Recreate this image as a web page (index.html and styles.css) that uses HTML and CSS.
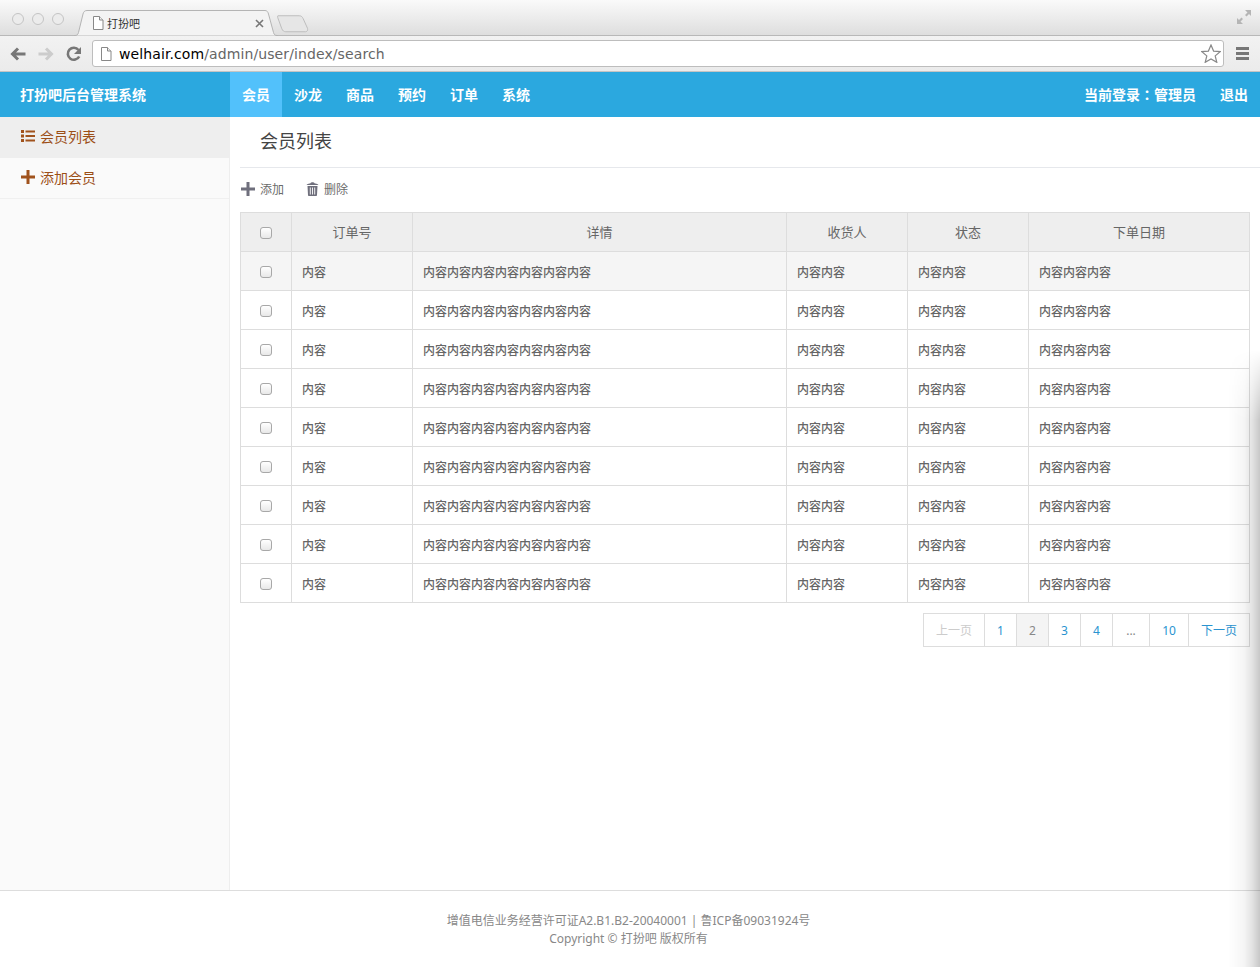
FILE: index.html
```html
<!DOCTYPE html>
<html lang="zh-CN">
<head>
    <meta charset="UTF-8">
    <title>打扮吧后台管理系统</title>
    <link rel="stylesheet" href="styles.css">
</head>
<body>
    <!-- browser window top -->
    <div class="tabbar">
        <div class="lights"><i></i><i></i><i></i></div>
        <div class="tab">
            <svg class="tab-bg" width="204" height="26" viewBox="0 0 204 26"><path d="M0 25.500h1c2 0 3-1 3.500-3L9 4c.5-2 1.500-3.500 4-3.500h178c2 0 3 1.500 3.500 3.500l5 18.500c.5 2 1.500 3 3.500 3h1" fill="#f3f3f3" stroke="#b4b4b4"/></svg>
            <svg class="page-icon" width="12" height="14" viewBox="0 0 12 14"><path d="M1.500.5h6l3.500 3.500v9.500h-9.500z" fill="#fff" stroke="#888"/><path d="M7.500.5v3.500h3.500" fill="#eee" stroke="#888"/></svg>
            <span class="tab-title">打扮吧</span>
            <svg class="tab-close" width="9" height="9" viewBox="0 0 9 9"><path d="M1 1l7 7M8 1l-7 7" stroke="#777" stroke-width="1.600"/></svg>
        </div>
        <svg class="new-tab" width="32" height="18" viewBox="0 0 33 18"><path d="M1 .5h22c2 0 3 1 4 3l4.500 10c.5 2-.5 3.500-2 3.500H9c-2 0-3-1-4-3L.8 2.500C.5 1.500.5.500 1 .5z" fill="#e6e6e6" stroke="#bcbcbc"/></svg>
        <svg class="fullscreen" width="16" height="16" viewBox="0 0 16 16"><path d="M9 1h6v6l-2-2-2.500 2.500-1.500-1.500 2.500-2.500zM7 15H1V9l2 2 2.500-2.500 1.500 1.500-2.500 2.500z" fill="#b5b5b5"/></svg>
    </div>
    <div class="toolbar">
        <svg width="16" height="14" viewBox="0 0 16 14"><path d="M15.500 7H3M8 1.500L2.500 7 8 12.500" fill="none" stroke="#777" stroke-width="3"/></svg>
        <svg width="16" height="14" viewBox="0 0 16 14"><path d="M.5 7H13M8 1.500L13.500 7 8 12.500" fill="none" stroke="#ccc" stroke-width="3"/></svg>
        <svg width="16" height="16" viewBox="0 0 16 16"><path d="M13.200 10.500A6 6 0 1 1 12.500 4" fill="none" stroke="#777" stroke-width="2.600"/><path d="M15 1v7H8z" fill="#777"/></svg>
        <div class="omnibox">
            <svg width="12" height="14" viewBox="0 0 12 14"><path d="M1.500.5h6l3.500 3.500v9.500h-9.500z" fill="#fff" stroke="#888"/><path d="M7.500.5v3.500h3.500" fill="#eee" stroke="#888"/></svg>
            <span class="url"><b>welhair.com</b>/admin/user/index/search</span>
            <svg class="star" width="20" height="19" viewBox="0 0 20 19"><path d="M10 1l2.600 6.100 6.600.5-5 4.300 1.600 6.400L10 14.900l-5.800 3.400 1.600-6.400-5-4.300 6.600-.5z" fill="#fff" stroke="#888" stroke-width="1.200"/></svg>
        </div>
        <div class="menu-btn"><i></i><i></i><i></i></div>
    </div>

    <div class="navbar">
        <div class="brand">打扮吧后台管理系统</div>
        <ul class="nav">
            <li class="active">会员</li>
            <li>沙龙</li>
            <li>商品</li>
            <li>预约</li>
            <li>订单</li>
            <li>系统</li>
        </ul>
        <div class="user">
            <span class="user-name" lang="zh-TW">当前登录：管理员</span>
            <span>退出</span>
        </div>
    </div>

    <div class="main">
        <div class="sidebar">
            <div class="side-item current">
                <svg width="14" height="12" viewBox="0 0 14 12"><path d="M0 0h3v3H0zM0 4.500h3v3H0zM0 9h3v3H0zM4.500.5H14v2H4.500zM4.500 5H14v2H4.500zM4.500 9.500H14v2H4.500z" fill="#a0521c"/></svg>
                会员列表
            </div>
            <div class="side-item">
                <svg width="14" height="14" viewBox="0 0 14 14"><path d="M5.500 0h3v5.500H14v3H8.500V14h-3V8.500H0v-3h5.500z" fill="#a0521c"/></svg>
                添加会员
            </div>
        </div>
        <div class="content">
            <h2 class="page-title">会员列表</h2>
            <div class="actions">
                <span class="action">
                    <svg width="14" height="14" viewBox="0 0 14 14"><path d="M5.500 0h3v5.500H14v3H8.500V14h-3V8.500H0v-3h5.500z" fill="#6f6f7c"/></svg>
                    添加
                </span>
                <span class="action">
                    <svg width="13" height="14" viewBox="0 0 13 14"><path d="M.5 3C1 1.500 4 1.500 4.500 1.200 5 0 8 0 8.500 1.200 9 1.500 12 1.500 12.500 3zM1.500 4h10l-.5 9c0 .6-.5 1-1 1H3c-.5 0-1-.4-1-1z" fill="#6f6f7c"/><path d="M4.300 5.500v7M6.500 5.500v7M8.700 5.500v7" stroke="#fff" stroke-width=".9"/></svg>
                    删除
                </span>
            </div>
            <table class="grid">
                <colgroup>
                    <col class="c-check"><col class="c-no"><col class="c-detail"><col class="c-man"><col class="c-state"><col class="c-date">
                </colgroup>
                <thead>
                    <tr><th><input type="checkbox"></th><th>订单号</th><th>详情</th><th>收货人</th><th>状态</th><th>下单日期</th></tr>
                </thead>
                <tbody>
                    <tr class="hover"><td><input type="checkbox"></td><td>内容</td><td>内容内容内容内容内容内容内容</td><td>内容内容</td><td>内容内容</td><td>内容内容内容</td></tr>
                    <tr><td><input type="checkbox"></td><td>内容</td><td>内容内容内容内容内容内容内容</td><td>内容内容</td><td>内容内容</td><td>内容内容内容</td></tr>
                    <tr><td><input type="checkbox"></td><td>内容</td><td>内容内容内容内容内容内容内容</td><td>内容内容</td><td>内容内容</td><td>内容内容内容</td></tr>
                    <tr><td><input type="checkbox"></td><td>内容</td><td>内容内容内容内容内容内容内容</td><td>内容内容</td><td>内容内容</td><td>内容内容内容</td></tr>
                    <tr><td><input type="checkbox"></td><td>内容</td><td>内容内容内容内容内容内容内容</td><td>内容内容</td><td>内容内容</td><td>内容内容内容</td></tr>
                    <tr><td><input type="checkbox"></td><td>内容</td><td>内容内容内容内容内容内容内容</td><td>内容内容</td><td>内容内容</td><td>内容内容内容</td></tr>
                    <tr><td><input type="checkbox"></td><td>内容</td><td>内容内容内容内容内容内容内容</td><td>内容内容</td><td>内容内容</td><td>内容内容内容</td></tr>
                    <tr><td><input type="checkbox"></td><td>内容</td><td>内容内容内容内容内容内容内容</td><td>内容内容</td><td>内容内容</td><td>内容内容内容</td></tr>
                    <tr><td><input type="checkbox"></td><td>内容</td><td>内容内容内容内容内容内容内容</td><td>内容内容</td><td>内容内容</td><td>内容内容内容</td></tr>
                </tbody>
            </table>
            <div class="pager">
                <a class="disabled prev">上一页</a><a class="num">1</a><a class="num on">2</a><a class="num">3</a><a class="num">4</a><a class="dots">...</a><a class="ten">10</a><a class="next">下一页</a>
            </div>
        </div>
    </div>

    <div class="footer">
        <p>增值电信业务经营许可证A2.B1.B2-20040001 | 鲁ICP备09031924号</p>
        <p>Copyright © 打扮吧 版权所有</p>
    </div>

    <div class="edge-shadow"></div>
</body>
</html>
```

FILE: styles.css
```css
* {
    box-sizing: border-box;
}
html, body {
    margin: 0;
    padding: 0;
}
body {
    position: relative;
    width: 1260px;
    height: 967px;
    overflow: hidden;
    display: flex;
    flex-direction: column;
    background: #fff;
    font-family: "Noto Sans", "Noto Sans CJK SC", sans-serif;
    font-size: 12px;
    color: #555;
}

/* browser top */
.tabbar {
    position: relative;
    height: 36px;
    flex: none;
    display: flex;
    align-items: flex-end;
    padding-left: 12px;
    background: linear-gradient(to bottom, #fafafa, #dedede);
    border-bottom: 1px solid #b8b8b8;
}
.lights {
    display: flex;
    gap: 8px;
    align-self: flex-start;
    margin-top: 13px;
}
.lights i {
    width: 12px;
    height: 12px;
    border-radius: 50%;
    border: 1px solid #c4c4c4;
    background: #ececec;
}
.tab {
    position: relative;
    width: 204px;
    height: 26px;
    margin-left: 10px;
    margin-bottom: -1px;
    display: flex;
    align-items: center;
    padding-left: 18px;
}
.tab-bg {
    position: absolute;
    top: 0;
    left: 0;
}
.page-icon, .tab-title, .tab-close {
    position: relative;
}
.tab-title {
    margin-left: 3px;
    font-size: 11px;
    color: #333;
}
.tab-close {
    margin-left: auto;
    margin-right: 14px;
}
.new-tab {
    margin-left: -1px;
    margin-bottom: 2px;
}
.fullscreen {
    position: absolute;
    top: 9px;
    right: 8px;
}
.toolbar {
    height: 36px;
    flex: none;
    display: flex;
    align-items: center;
    gap: 12px;
    padding-left: 10px;
    background: linear-gradient(to bottom, #f2f2f2, #ebebeb);
    border-bottom: 1px solid #c4c4c4;
}
.omnibox {
    width: 1132px;
    height: 27px;
    margin-left: -2px;
    display: flex;
    align-items: center;
    padding: 0 2px 0 7px;
    background: #fff;
    border: 1px solid #bdbdbd;
    border-radius: 3px;
}
.url {
    margin-left: 7px;
    font-family: "DejaVu Sans", sans-serif;
    font-size: 14px;
    letter-spacing: .1px;
    color: #666;
}
.url b {
    font-weight: 400;
    color: #000;
}
.star {
    margin-left: auto;
}
.menu-btn {
    display: flex;
    flex-direction: column;
    gap: 2px;
}
.menu-btn i {
    width: 13px;
    height: 3px;
    background: #777;
}

/* navbar */
.navbar {
    height: 45px;
    flex: none;
    display: flex;
    align-items: stretch;
    background: #2ba8df;
    color: #fff;
    font-size: 14px;
    font-weight: 700;
    line-height: 45px;
}
.brand {
    width: 230px;
    padding-left: 20px;
}
.nav {
    display: flex;
    margin: 0;
    padding: 0;
    list-style: none;
}
.nav li {
    width: 52px;
    text-align: center;
}
.nav li.active {
    background: #52c1fb;
}
.user {
    margin-left: auto;
    display: flex;
    gap: 24px;
    padding-right: 12px;
}
/* TC font has the centred colon */
.user-name {
    font-family: "Noto Sans CJK TC", sans-serif;
}

/* body area */
.main {
    flex: 1;
    display: flex;
    min-height: 0;
}
.sidebar {
    width: 230px;
    flex: none;
    background: #fafafa;
    border-right: 1px solid #eee;
}
.side-item {
    height: 41px;
    display: flex;
    align-items: center;
    gap: 5px;
    padding-left: 21px;
    padding-bottom: 2px;
    font-size: 14px;
    color: #9c4f17;
    border-bottom: 1px solid #f0f0f0;
}
.side-item.current {
    background: #eee;
    border-bottom: none;
    padding-bottom: 4px;
}
.content {
    flex: 1;
    padding-left: 10px;
    padding-right: 10px;
}
.page-title {
    margin: 0 -10px 0 0;
    height: 51px;
    padding-left: 20px;
    line-height: 49px;
    font-size: 18px;
    font-weight: 400;
    color: #444;
    border-bottom: 1px solid #e6e8ec;
}
.actions {
    height: 44px;
    display: flex;
    align-items: center;
    gap: 22px;
    padding-left: 1px;
    padding-bottom: 2px;
    color: #6b6b6b;
}
.action {
    display: flex;
    align-items: center;
    gap: 5px;
}
.grid {
    width: 1010px;
    table-layout: fixed;
    border-collapse: collapse;
}
.c-check { width: 51px; }
.c-no { width: 121px; }
.c-detail { width: 374px; }
.c-man { width: 121px; }
.c-state { width: 121px; }
.grid th, .grid td {
    height: 39px;
    border: 1px solid #ddd;
    font-size: 12px;
}
.grid th {
    padding: 0 10px 1px;
    text-align: center;
    font-size: 13px;
    font-weight: 400;
    background: #eee;
    color: #666;
}
.grid td {
    padding: 2px 10px 0;
    font-weight: 500;
    color: #666;
}
.grid tr > :first-child {
    padding: 0;
    text-align: center;
}
.grid tr > th:first-child {
    padding-bottom: 2px;
}
.grid tr.hover td {
    background: #f5f5f5;
}
.grid input {
    appearance: none;
    -webkit-appearance: none;
    width: 12px;
    height: 12px;
    margin: 0;
    vertical-align: middle;
    background: linear-gradient(to bottom, #fff, #e8e8e8);
    border: 1px solid #a8a8a8;
    border-radius: 3px;
}
.pager {
    display: flex;
    justify-content: flex-end;
    margin-top: 10px;
}
.pager a {
    height: 34px;
    line-height: 33px;
    text-align: center;
    border: 1px solid #ddd;
    margin-left: -1px;
    color: #2a93d0;
}
.pager .num { width: 33px; }
.pager .prev { width: 62px; }
.pager .dots { width: 38px; color: #888; }
.pager .ten { width: 40px; }
.pager .next { width: 62px; }
.pager .disabled { color: #ccc; }
.pager .on {
    background: #f4f4f4;
    color: #888;
}

.footer {
    height: 77px;
    flex: none;
    padding: 21px 3px 0 0;
    border-top: 1px solid #ddd;
    text-align: center;
    color: #888;
}
.footer p {
    margin: 0;
    line-height: 18px;
}

/* soft dark edge lying over the right side of the page */
.edge-shadow {
    position: absolute;
    top: 350px;
    right: 0;
    width: 32px;
    height: 617px;
    background: linear-gradient(to right, rgba(0,0,0,0), rgba(0,0,0,.04) 50%, rgba(0,0,0,.11) 75%, rgba(0,0,0,.22));
    -webkit-mask-image: linear-gradient(to bottom, transparent, #000 70px);
    mask-image: linear-gradient(to bottom, transparent, #000 70px);
    pointer-events: none;
}
```
